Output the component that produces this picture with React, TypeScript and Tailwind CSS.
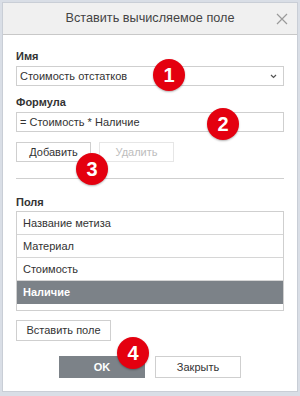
const FIELDS = ['Название метиза', 'Материал', 'Стоимость', 'Наличие']

function Badge({ n, className }: { n: number; className: string }) {
  return (
    <div
      className={`absolute w-[32px] h-[32px] rounded-full bg-[#e4000f] text-white flex items-center justify-center text-[20px] font-bold leading-none shadow-[0_1px_2px_rgba(0,0,0,0.3)] ${className}`}
    >
      {n}
    </div>
  )
}

export default function App() {
  return (
    <div className="w-[300px] h-[396px] bg-[#d9dee6] p-[2px] pb-[4px] font-['Liberation_Sans',Arial,sans-serif] text-[11px] text-[#333]">
      <div className="relative h-full bg-white border border-[#c9ced6] flex flex-col">
        <div className="h-[32px] shrink-0 bg-[#f0f0f0] border-b border-[#c8c8c8] flex items-center justify-center relative">
          <span className="text-[12.7px] text-[#444]">Вставить вычисляемое поле</span>
          <svg className="absolute right-[9px] top-[10px]" width="12" height="12" viewBox="0 0 12 12">
            <path d="M1 1L11 11M11 1L1 11" stroke="#9a9a9a" strokeWidth="1.2" />
          </svg>
        </div>

        <div className="px-[13px] pt-[14px] flex flex-col">
          <div className="font-bold leading-[14px]">Имя</div>
          <div className="mt-[3px] h-[20px] border border-[#cfcfcf] flex items-center pl-[3px] pr-[6px] justify-between">
            <span>Стоимость отстатков</span>
            <svg width="7" height="5" viewBox="0 0 7 5">
              <path d="M1 1L3.5 3.5L6 1" stroke="#555" strokeWidth="1.2" fill="none" />
            </svg>
          </div>

          <div className="mt-[9px] font-bold leading-[14px]">Формула</div>
          <div className="mt-[3px] h-[20px] border border-[#cfcfcf] flex items-center pl-[3px]">
            = Стоимость * Наличие
          </div>

          <div className="mt-[10px] flex gap-[8px]">
            <div className="w-[75px] h-[20px] border border-[#cfcfcf] flex items-center justify-center">Добавить</div>
            <div className="w-[75px] h-[20px] border border-[#e6e6e6] flex items-center justify-center text-[#bdbdbd]">Удалить</div>
          </div>

          <div className="mt-[16px] border-t border-[#cfcfcf]" />

          <div className="mt-[16px] font-bold leading-[14px]">Поля</div>
          <div className="mt-[2px] h-[100px] border border-[#cfcfcf]">
            {FIELDS.map((f, i) => (
              <div
                key={f}
                className={`h-[23px] flex items-center pl-[6px] ${
                  i === FIELDS.length - 1
                    ? 'bg-[#7c8288] text-white font-bold'
                    : 'border-b border-[#d6d6d6]'
                }`}
              >
                {f}
              </div>
            ))}
          </div>

          <div className="mt-[9px] w-[95px] h-[21px] border border-[#cfcfcf] flex items-center justify-center">
            Вставить поле
          </div>

          <div className="mt-[15px] flex justify-center gap-[10px]">
            <div className="w-[86px] h-[22px] bg-[#7c8288] text-white font-bold flex items-center justify-center">OK</div>
            <div className="w-[86px] h-[22px] border border-[#cfcfcf] flex items-center justify-center">Закрыть</div>
          </div>
        </div>

        <Badge n={1} className="left-[150px] top-[56px]" />
        <Badge n={2} className="left-[204px] top-[105px]" />
        <Badge n={3} className="left-[73px] top-[150px]" />
        <Badge n={4} className="left-[114px] top-[334px]" />
      </div>
    </div>
  )
}
